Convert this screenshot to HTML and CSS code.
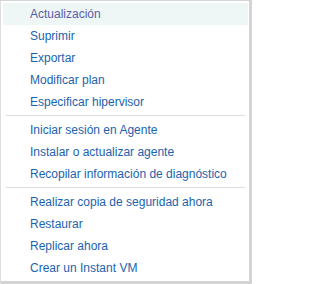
FILE: index.html
```html
<!DOCTYPE html>
<html>
<head>
<meta charset="utf-8">
<link rel="stylesheet" href="styles.css">
</head>
<body>
<div class="menu">
  <div class="item active">Actualización</div>
  <div class="item">Suprimir</div>
  <div class="item">Exportar</div>
  <div class="item">Modificar plan</div>
  <div class="item">Especificar hipervisor</div>
  <div class="sep"></div>
  <div class="item">Iniciar sesión en Agente</div>
  <div class="item">Instalar o actualizar agente</div>
  <div class="item">Recopilar información de diagnóstico</div>
  <div class="sep"></div>
  <div class="item">Realizar copia de seguridad ahora</div>
  <div class="item">Restaurar</div>
  <div class="item">Replicar ahora</div>
  <div class="item">Crear un Instant VM</div>
</div>
</body>
</html>
```

FILE: styles.css
```css
html, body {
  margin: 0;
  padding: 0;
  background: #ffffff;
}
.menu {
  box-sizing: border-box;
  width: 252px;
  height: 284px;
  background: #ffffff;
  border-top: 1px solid #d6d6d6;
  border-left: 1px solid #dedede;
  border-right: 3px solid #d4d4d4;
  border-bottom: 3px solid #d4d4d4;
  padding: 2px 1px 2px 2px;
  font-family: "Liberation Sans", Arial, sans-serif;
  font-size: 12px;
}
.item {
  height: 22px;
  line-height: 22px;
  padding-left: 27px;
  color: #1a63ae;
  white-space: nowrap;
}
.item.active {
  background: #eef7f6;
  color: #5a5ca8;
}
.sep {
  height: 1px;
  margin: 2px 3px 3px 3px;
  background: #dcdcdc;
}
```
